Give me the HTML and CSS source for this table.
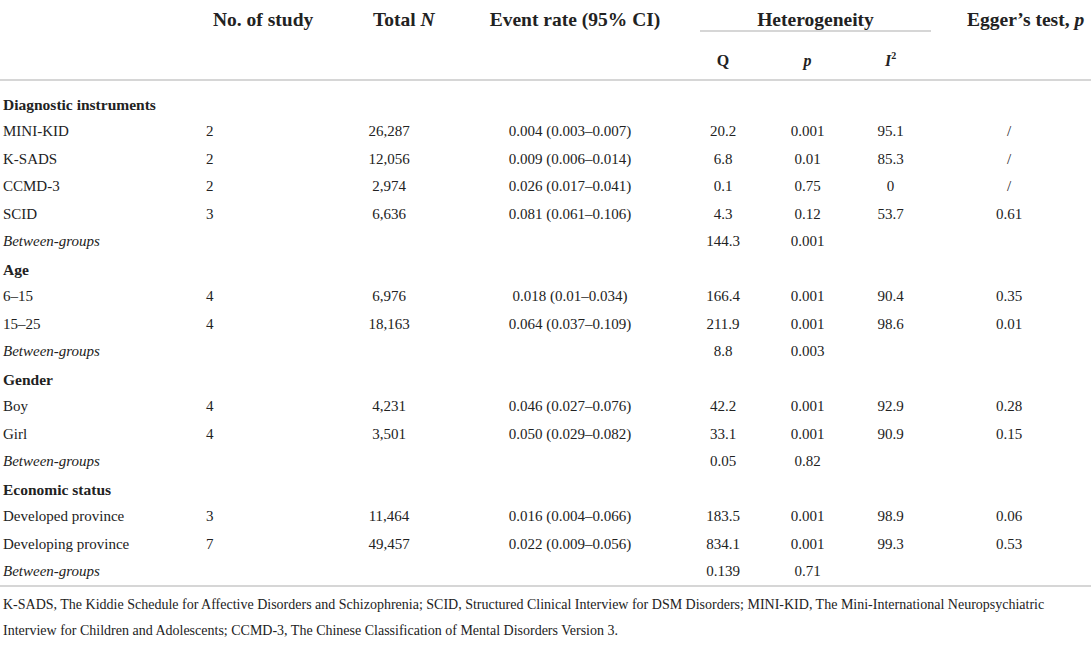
FILE: index.html
```html
<!DOCTYPE html>
<html lang="en">
<head>
<meta charset="utf-8">
<title>Subgroup analysis</title>
<link rel="stylesheet" href="styles.css">
</head>
<body>
<table class="tbl">
  <colgroup>
    <col class="w-label"><col class="w-study"><col class="w-total"><col class="w-event">
    <col class="w-q"><col class="w-p"><col class="w-i2"><col class="w-egger">
  </colgroup>
  <thead>
    <tr class="hr1">
      <th class="h-label" rowspan="2"></th>
      <th class="h-study" rowspan="2">No. of study</th>
      <th class="h-total" rowspan="2">Total <i>N</i></th>
      <th class="h-event" rowspan="2">Event rate (95% CI)</th>
      <th class="h-het" colspan="3">Heterogeneity</th>
      <th class="h-egger" rowspan="2">Egger’s test, <i>p</i></th>
    </tr>
    <tr class="hr2">
      <th class="h-sub c-q">Q</th>
      <th class="h-sub c-p"><i>p</i></th>
      <th class="h-sub c-i2"><i>I</i><sup>2</sup></th>
    </tr>
  </thead>
  <tbody>
    <tr class="cat first"><td colspan="8">Diagnostic instruments</td></tr>
    <tr><td class="c-label">MINI-KID</td><td class="c-study">2</td><td class="c-total">26,287</td><td class="c-event">0.004 (0.003–0.007)</td><td class="c-q">20.2</td><td class="c-p">0.001</td><td class="c-i2">95.1</td><td class="c-egger">/</td></tr>
    <tr><td class="c-label">K-SADS</td><td class="c-study">2</td><td class="c-total">12,056</td><td class="c-event">0.009 (0.006–0.014)</td><td class="c-q">6.8</td><td class="c-p">0.01</td><td class="c-i2">85.3</td><td class="c-egger">/</td></tr>
    <tr><td class="c-label">CCMD-3</td><td class="c-study">2</td><td class="c-total">2,974</td><td class="c-event">0.026 (0.017–0.041)</td><td class="c-q">0.1</td><td class="c-p">0.75</td><td class="c-i2">0</td><td class="c-egger">/</td></tr>
    <tr><td class="c-label">SCID</td><td class="c-study">3</td><td class="c-total">6,636</td><td class="c-event">0.081 (0.061–0.106)</td><td class="c-q">4.3</td><td class="c-p">0.12</td><td class="c-i2">53.7</td><td class="c-egger">0.61</td></tr>
    <tr><td class="c-label between">Between-groups</td><td class="c-study"></td><td class="c-total"></td><td class="c-event"></td><td class="c-q">144.3</td><td class="c-p">0.001</td><td class="c-i2"></td><td class="c-egger"></td></tr>

    <tr class="cat"><td colspan="8">Age</td></tr>
    <tr><td class="c-label">6–15</td><td class="c-study">4</td><td class="c-total">6,976</td><td class="c-event">0.018 (0.01–0.034)</td><td class="c-q">166.4</td><td class="c-p">0.001</td><td class="c-i2">90.4</td><td class="c-egger">0.35</td></tr>
    <tr><td class="c-label">15–25</td><td class="c-study">4</td><td class="c-total">18,163</td><td class="c-event">0.064 (0.037–0.109)</td><td class="c-q">211.9</td><td class="c-p">0.001</td><td class="c-i2">98.6</td><td class="c-egger">0.01</td></tr>
    <tr><td class="c-label between">Between-groups</td><td class="c-study"></td><td class="c-total"></td><td class="c-event"></td><td class="c-q">8.8</td><td class="c-p">0.003</td><td class="c-i2"></td><td class="c-egger"></td></tr>

    <tr class="cat"><td colspan="8">Gender</td></tr>
    <tr><td class="c-label">Boy</td><td class="c-study">4</td><td class="c-total">4,231</td><td class="c-event">0.046 (0.027–0.076)</td><td class="c-q">42.2</td><td class="c-p">0.001</td><td class="c-i2">92.9</td><td class="c-egger">0.28</td></tr>
    <tr><td class="c-label">Girl</td><td class="c-study">4</td><td class="c-total">3,501</td><td class="c-event">0.050 (0.029–0.082)</td><td class="c-q">33.1</td><td class="c-p">0.001</td><td class="c-i2">90.9</td><td class="c-egger">0.15</td></tr>
    <tr><td class="c-label between">Between-groups</td><td class="c-study"></td><td class="c-total"></td><td class="c-event"></td><td class="c-q">0.05</td><td class="c-p">0.82</td><td class="c-i2"></td><td class="c-egger"></td></tr>

    <tr class="cat"><td colspan="8">Economic status</td></tr>
    <tr><td class="c-label">Developed province</td><td class="c-study">3</td><td class="c-total">11,464</td><td class="c-event">0.016 (0.004–0.066)</td><td class="c-q">183.5</td><td class="c-p">0.001</td><td class="c-i2">98.9</td><td class="c-egger">0.06</td></tr>
    <tr><td class="c-label">Developing province</td><td class="c-study">7</td><td class="c-total">49,457</td><td class="c-event">0.022 (0.009–0.056)</td><td class="c-q">834.1</td><td class="c-p">0.001</td><td class="c-i2">99.3</td><td class="c-egger">0.53</td></tr>
    <tr class="last"><td class="c-label between">Between-groups</td><td class="c-study"></td><td class="c-total"></td><td class="c-event"></td><td class="c-q">0.139</td><td class="c-p">0.71</td><td class="c-i2"></td><td class="c-egger"></td></tr>
  </tbody>
</table>
<p class="foot">K-SADS, The Kiddie Schedule for Affective Disorders and Schizophrenia; SCID, Structured Clinical Interview for DSM Disorders; MINI-KID, The Mini-International Neuropsychiatric<br>Interview for Children and Adolescents; CCMD-3, The Chinese Classification of Mental Disorders Version 3.</p>
</body>
</html>
```

FILE: styles.css
```css
html, body {
  margin: 0;
  padding: 0;
  background: #ffffff;
}

body {
  font-family: "Liberation Serif", "Times New Roman", serif;
  color: #222222;
  width: 1091px;
}

.tbl {
  width: 1091px;
  border-collapse: collapse;
  table-layout: fixed;
  font-size: 15px;
}

.w-label { width: 200px; }
.w-study { width: 140px; }
.w-total { width: 110px; }
.w-event { width: 250px; }
.w-q { width: 65px; }
.w-p { width: 85px; }
.w-i2 { width: 81px; }
.w-egger { width: 160px; }

.tbl thead {
  border-bottom: 2px solid #d6d6d6;
}

.tbl th {
  font-weight: bold;
  font-size: 19.5px;
  line-height: 20px;
  padding: 0;
  white-space: nowrap;
  vertical-align: top;
  text-align: left;
}

.tbl .hr1 th {
  padding-top: 10px;
}

.tbl th.h-study { padding-left: 13px; }
.tbl th.h-total { padding-left: 33px; }
.tbl th.h-event { text-align: center; }
.tbl th.h-egger { padding-left: 36px; }

.tbl th.h-het {
  text-align: center;
  border-bottom: 2px solid #d6d6d6;
  height: 20px;
}

.tbl th.h-sub {
  font-size: 16px;
  padding-top: 19px;
  padding-bottom: 8px;
  text-align: center;
}

.tbl th.h-sub.c-q { padding-right: 19px; }

.h-sub sup {
  font-size: 10px;
  line-height: 0;
  vertical-align: 7px;
}

.tbl td {
  padding: 0;
  line-height: 27.47px;
  height: 27.47px;
  white-space: nowrap;
}

.tbl .cat td {
  font-weight: bold;
  font-size: 15.5px;
  padding-left: 3px;
}

.tbl .first td {
  padding-top: 10px;
}

.tbl tbody {
  border-bottom: 2px solid #d6d6d6;
}

.tbl td.c-label { padding-left: 3px; text-align: left; }
.tbl td.between { font-style: italic; }
.tbl td.c-study { text-align: left; padding-left: 6px; }
.tbl td.c-total { text-align: center; padding-right: 12px; }
.tbl td.c-event { text-align: center; padding-right: 10px; }
.tbl td.c-q { text-align: center; padding-right: 19px; }
.tbl td.c-p { text-align: center; }
.tbl td.c-i2 { text-align: center; }
.tbl td.c-egger { text-align: center; padding-right: 4px; }

.foot {
  margin: 0;
  padding: 5px 0 0 3px;
  font-size: 14px;
  line-height: 26px;
  white-space: nowrap;
}
```
